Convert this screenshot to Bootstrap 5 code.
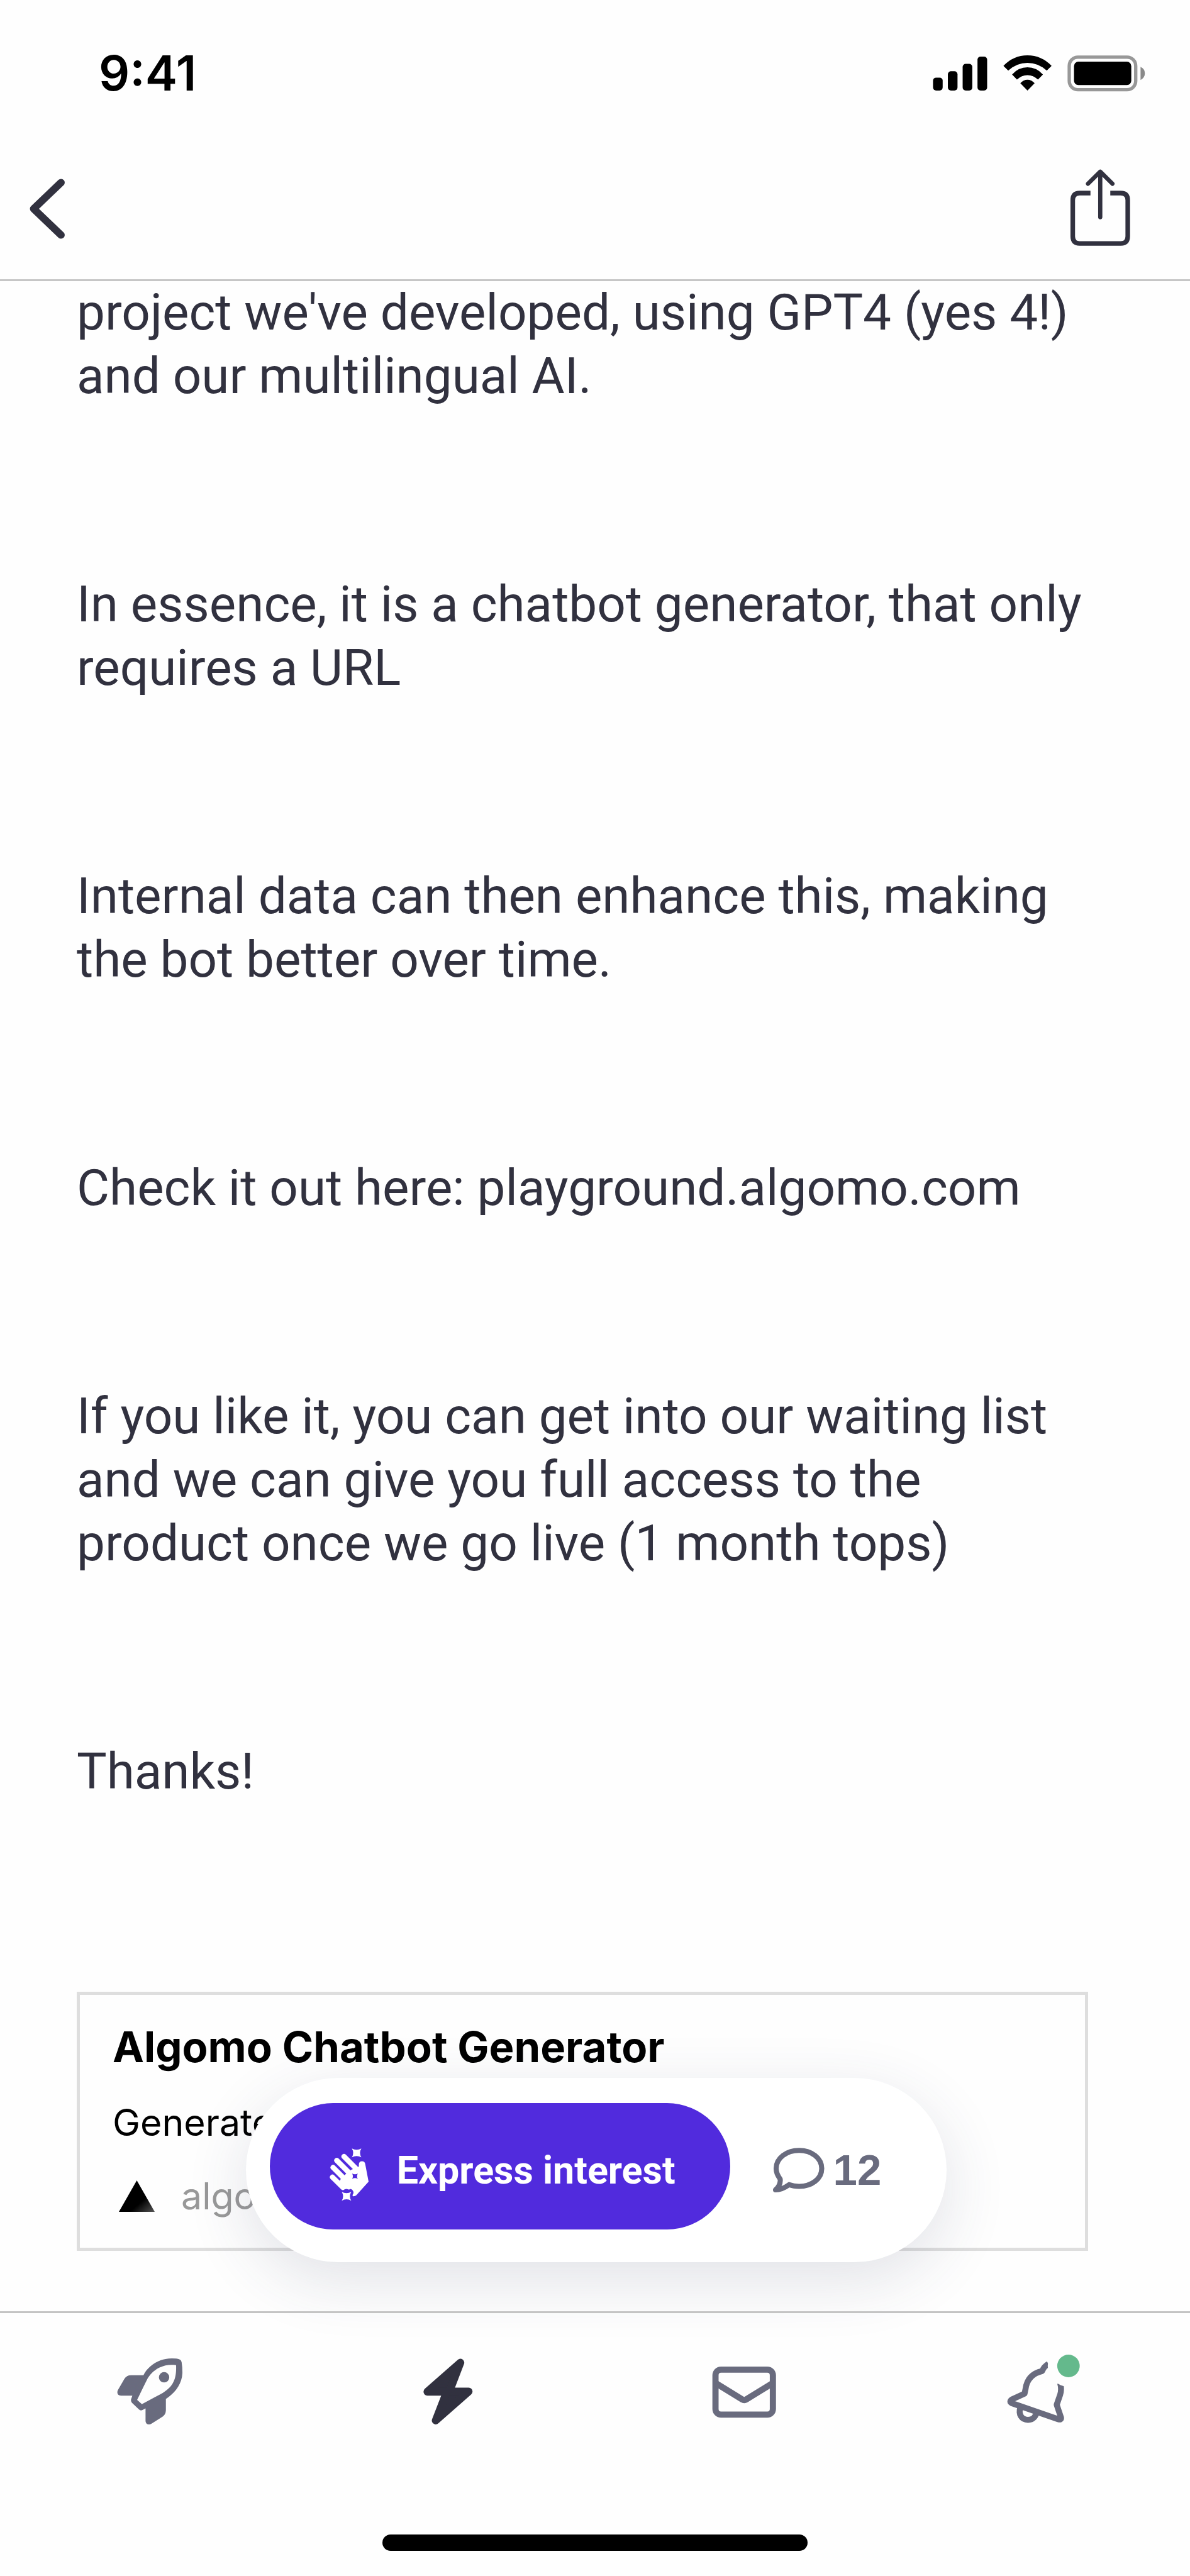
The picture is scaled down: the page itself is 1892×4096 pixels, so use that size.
<!DOCTYPE html>
<html lang="en">
<head>
<meta charset="utf-8">
<meta name="viewport" content="width=device-width, initial-scale=1">
<title>Algomo Chatbot Generator</title>
<link href="https://cdn.jsdelivr.net/npm/bootstrap@5.3.0/dist/css/bootstrap.min.css" rel="stylesheet">
<style>
  :root { --ink: #31313f; --muted: #696b7e; --paper: #fefefe; --brand: #512bdd; }
  body { background: var(--paper); color: var(--ink); font-family: Roboto, "Liberation Sans", sans-serif; }
  svg { display: block; flex: none; }
  .status-bar { height: 220px; padding: 12px 71px 0 157px; color: #000; }
  .clock { font: 600 77px/92px Inter, sans-serif; }
  .status-icons { gap: 25px; }
  .top-bar { height: 227px; padding: 0 94px 0 47px; border-bottom: 3px solid #c6c6c6; }
  .bare-btn { padding: 0; border: 0; background: none; color: var(--ink); }
  .post { padding: 0 162px 96px 122px; }
  .post p { margin: 0 0 262px; font-size: 80px; line-height: 101px; }
  .post p:last-of-type { margin-bottom: 299px; }
  .preview { border: 5px solid #dedede; padding: 45px 52px 47px; gap: 47px; font: 400 59px/70px Inter, sans-serif; color: #000; }
  .preview h2 { font-size: 67px; line-height: 76px; font-weight: 700; margin: 0; }
  .source { gap: 42px; color: #999; padding-left: 10px; }
  .dock { bottom: 78px; padding-left: 4px; pointer-events: none; }
  .pill { padding: 40px 104px 52px 38px; gap: 67px; border-radius: 147px; background: #fff; box-shadow: 0 28px 100px rgba(50, 60, 90, .14); pointer-events: auto; }
  .interest { height: 201px; padding: 12px 87px 0 95px; gap: 44px; border: 0; border-radius: 101px; background: var(--brand); color: #fff; font-size: 61px; line-height: 72px; font-weight: 700; white-space: nowrap; }
  .comments { padding-top: 12px; gap: 14px; font: 700 69px/82px "Liberation Sans", sans-serif; color: var(--muted); text-decoration: none; }
  .tab-bar { border-top: 3px solid #c4c4c4; padding-top: 66px; }
  .tab-bar a { color: var(--muted); }
  .tab-bar a.current { color: var(--ink); }
  .home-bar { width: 676px; height: 26px; border-radius: 13px; background: #000; margin-bottom: 40px; }
</style>
<script src="https://cdn.jsdelivr.net/npm/bootstrap@5.3.0/dist/js/bootstrap.bundle.min.js"></script>
</head>
<body class="min-vh-100 d-flex flex-column">

<header>
  <div class="status-bar d-flex align-items-center justify-content-between">
    <span class="clock">9:41</span>
    <div class="status-icons d-flex align-items-center">
      <svg width="87" height="59" viewBox="1505.5 88 88 60" fill="currentColor" aria-hidden="true">
        <rect x="1505.7" y="125" width="15.6" height="21" rx="5"/><rect x="1529.7" y="114.7" width="15.6" height="31.3" rx="5"/>
        <rect x="1553.6" y="102.7" width="15.6" height="43.3" rx="5"/><rect x="1577.6" y="91" width="15.6" height="55" rx="5"/>
      </svg>
      <svg width="77" height="59" viewBox="1618.5 88 78 60" fill="currentColor" aria-hidden="true">
        <path d="M1618.7 106Q1635 89 1657.6 89T1696.6 106L1688.8 113.7Q1675 101.3 1657.6 101.3T1626.5 113.7Z"/>
        <path d="M1632.7 120Q1643 108.4 1657.6 108.4T1682.6 120L1674.6 128.2Q1667 121 1657.6 121T1640.6 128.2Z"/>
        <path d="M1646 134Q1651 128.3 1657.6 128.3T1669.2 134L1657.6 146Z"/>
      </svg>
      <svg width="124" height="59" viewBox="1722 88 126 60" aria-hidden="true">
        <rect x="1725" y="92" width="107.5" height="52.5" rx="14" fill="none" stroke="#989898" stroke-width="5.4"/>
        <rect x="1732.7" y="99.3" width="92.6" height="37.7" rx="7"/>
        <path d="M1840.3 107.5Q1847.3 111 1847.3 118T1840.3 129Z" fill="#8a8a8a"/>
      </svg>
    </div>
  </div>
  <nav class="top-bar d-flex align-items-center justify-content-between" aria-label="Post">
    <button class="bare-btn" type="button" aria-label="Back">
      <svg width="57" height="96" viewBox="47.5 289 58 98" fill="none" stroke="currentColor" stroke-width="12" stroke-linecap="round" stroke-linejoin="round"><path d="M98.500 295.500L54 338L98.500 380.500"/></svg>
    </button>
    <button class="bare-btn" type="button" aria-label="Share">
      <svg width="97" height="128" viewBox="1727 272 98 130" fill="none" stroke="currentColor" stroke-width="7.4">
        <path d="M1760 311.600H1742.500Q1731.400 311.600 1731.400 323V381.500Q1731.400 393 1742.500 393H1809Q1820.200 393 1820.200 381.500V323Q1820.200 311.600 1809 311.600H1792"/>
        <path d="M1775.800 278V350.500M1756 296.500L1775.800 277L1795.500 296.500" stroke-width="6.8" stroke-linecap="round" stroke-linejoin="round"/>
      </svg>
    </button>
  </nav>
</header>

<main class="position-relative">
  <article class="post">
    <p>project we've developed, using GPT4 (yes 4!) and our multilingual AI.</p>
    <p>In essence, it is a chatbot generator, that only requires a URL</p>
    <p>Internal data can then enhance this, making the bot better over time.</p>
    <p>Check it out here: playground.algomo.com</p>
    <p>If you like it, you can get into our waiting list and we can give you full access to the product once we go live (1 month tops)</p>
    <p>Thanks!</p>
    <section class="preview d-flex flex-column">
      <h2>Algomo Chatbot Generator</h2>
      <div>Generate</div>
      <div class="source d-flex align-items-center">
        <svg width="57" height="50" viewBox="0 0 57 50" aria-hidden="true">
          <defs><linearGradient id="shade" x1="0.5" y1="0.5" x2="1" y2="1"><stop offset="0.3" stop-color="#000"/><stop offset="1" stop-color="#555"/></linearGradient></defs>
          <path d="M28.500 0L57 50H0Z" fill="url(#shade)"/>
        </svg>
        <span>algomo</span>
      </div>
    </section>
  </article>

  <div class="dock position-absolute start-0 end-0 d-flex justify-content-center">
    <div class="pill d-flex align-items-center">
      <button class="interest d-flex align-items-center" type="button">
        <svg width="63" height="98" viewBox="100 36 192 298" fill="#fff" stroke-linecap="round" aria-hidden="true">
          <path d="M170 118L235 183M135 137L202 204M117 171L182 236M114 218L165 268" stroke="#fff" stroke-width="25" fill="none"/>
          <path d="M205 182L238 170Q243 168 242 156Q243 141 257 141Q271 141 273 156L289 240L229 306Q222 312 212 310Q210 304 216 295Q216 280 202 275Q194 281 184 275Q170 279 158 272L150 232L178 203Z"/>
          <path d="M208 79Q231 92 254 79Q241 100 254 122Q231 109 208 122Q221 100 208 79Z"/>
          <path d="M159 289Q182 302 205 289Q192 310 205 332Q182 319 159 332Q172 310 159 289Z"/>
          <path d="M209 200Q223 208 237 200Q229 213 237 227Q223 218 209 227Q217 213 209 200Z" fill="#512bdd"/>
        </svg>
        <span>Express interest</span>
      </button>
      <a class="comments d-flex align-items-center" href="#comments">
        <svg width="83" height="73" viewBox="1248 3465.5 84 74" fill="none" stroke="currentColor" stroke-width="8.2" stroke-linejoin="round" aria-hidden="true">
          <path d="M1253 3534.500C1259 3529 1261.500 3524 1260.500 3517C1256 3511 1254 3506 1254 3500C1254 3483 1271 3470.800 1291 3470.800C1311 3470.800 1327.500 3483 1327.500 3500C1327.500 3517 1311 3528.800 1291 3528.800C1285 3528.800 1280 3528 1275 3526C1268 3531 1261 3534.500 1253 3534.500Z"/>
        </svg>
        <span>12</span>
      </a>
    </div>
  </div>
</main>

<nav class="tab-bar flex-grow-1 d-flex flex-column align-items-center justify-content-between position-relative" aria-label="Main">
  <div class="row g-0 w-100">
    <a class="col d-flex justify-content-center" href="#launches" aria-label="Launches">
      <svg width="118" height="118" viewBox="180 3800 120 120" fill="currentColor">
        <path fill-rule="evenodd" d="M276.900 3806Q285 3806 289 3807.500Q292 3808.500 292.600 3812Q294 3820 293.900 3830C293 3848 282 3862 267.200 3871.700V3890Q267 3896.500 262.400 3900L244 3911.500Q239.500 3914.500 235.500 3911Q234.300 3909.500 234.300 3907V3887L230.500 3889Q226.500 3891.500 223.500 3888.500L212.500 3878Q210 3875 211 3872L213 3866.300H194.500Q188.500 3866.300 188.700 3860.500Q188.900 3859 189.500 3857.500L200.300 3839Q203.500 3833.300 211 3833.300H230.900C238 3819 255 3806 276.900 3806ZM283.700 3817C262 3814 246 3825 238 3838C232 3850 226 3862 220.700 3873.300L228.400 3880L262 3862C280 3851 284.500 3838 283.700 3817Z"/>
        <circle cx="264.3" cy="3836.700" r="8.4"/>
      </svg>
    </a>
    <a class="current col d-flex justify-content-center" href="#discover" aria-label="Discover" aria-current="page">
      <svg width="118" height="118" viewBox="660 3800 120 120" fill="currentColor" stroke="currentColor" stroke-width="12.6" stroke-linejoin="round"><path d="M742.300 3813L724.500 3859.600H755.700L702.500 3906.500L720.500 3860H689Z"/></svg>
    </a>
    <a class="col d-flex justify-content-center" href="#messages" aria-label="Messages">
      <svg width="118" height="118" viewBox="1140 3800 120 120" fill="none" stroke="currentColor" stroke-width="10">
        <rect x="1153.8" y="3824.300" width="92.800" height="72.700" rx="9"/><path d="M1154 3846L1197 3872.500Q1200.300 3874.500 1203.500 3872.500L1246.500 3846" stroke-linejoin="round"/>
      </svg>
    </a>
    <a class="col d-flex justify-content-center" href="#notifications" aria-label="Notifications">
      <svg width="126" height="118" viewBox="1616 3799 128 120" fill="none" stroke="currentColor" stroke-width="9.600" stroke-linejoin="round">
        <path d="M1691 3814Q1684 3818 1681 3825.500C1661 3830 1655.500 3843 1654 3855L1652.500 3862L1632 3871.500Q1627 3875 1632 3877.500L1707 3903.500Q1712 3905 1711.500 3901L1704.500 3880L1710 3864Q1713 3855 1710 3845"/>
        <path d="M1645.700 3884C1642 3896 1648 3904.500 1658 3904.500C1666 3904.500 1671 3899 1672 3892"/>
        <circle cx="1723.500" cy="3817.300" r="33.500" fill="#fefefe" stroke="none"/>
        <circle cx="1723.500" cy="3817.300" r="18.200" fill="#64b98c" stroke="none"/>
      </svg>
    </a>
  </div>
  <div class="home-bar"></div>
</nav>
</body>
</html>
